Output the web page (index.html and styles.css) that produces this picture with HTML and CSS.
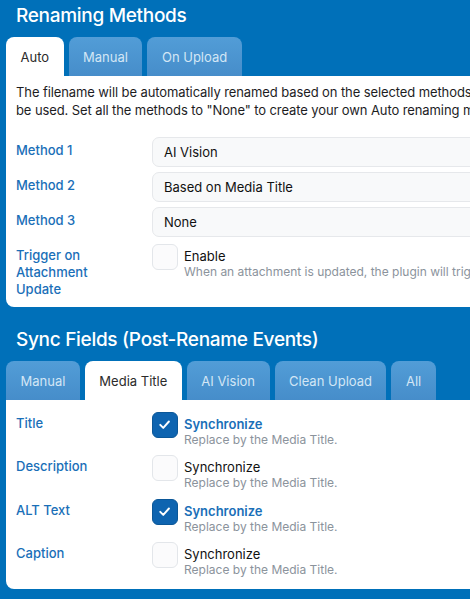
FILE: index.html
```html
<!DOCTYPE html>
<html>
<head>
<meta charset="utf-8">
<link rel="stylesheet" href="styles.css">
</head>
<body>
<div class="page">
  <section class="section">
    <h2 class="title">Renaming Methods</h2>
    <div class="tabs">
      <div class="tab active">Auto</div>
      <div class="tab">Manual</div>
      <div class="tab">On Upload</div>
    </div>
    <div class="card card-first">
      <p class="desc">The filename will be automatically renamed based on the selected methods, in order. The first one that works will<br>be used. Set all the methods to "None" to create your own Auto renaming method.</p>
      <div class="row row-method">
        <div class="label">Method 1</div>
        <div class="select">AI Vision</div>
      </div>
      <div class="row row-method">
        <div class="label">Method 2</div>
        <div class="select">Based on Media Title</div>
      </div>
      <div class="row row-method">
        <div class="label">Method 3</div>
        <div class="select">None</div>
      </div>
      <div class="row row-check">
        <div class="label">Trigger on Attachment Update</div>
        <div class="box"></div>
        <div class="check-text">
          <div class="check-title">Enable</div>
          <div class="check-sub">When an attachment is updated, the plugin will trigger the renaming process automatically.</div>
        </div>
      </div>
    </div>
  </section>

  <section class="section">
    <h2 class="title">Sync Fields (Post-Rename Events)</h2>
    <div class="tabs">
      <div class="tab">Manual</div>
      <div class="tab active">Media Title</div>
      <div class="tab">AI Vision</div>
      <div class="tab">Clean Upload</div>
      <div class="tab">All</div>
    </div>
    <div class="card card-second">
      <div class="row row-check">
        <div class="label">Title</div>
        <div class="box checked"><svg viewBox="0 0 26 26" class="tick"><path d="M8.2 13.4 L11.6 16.8 L18 9.6" /></svg></div>
        <div class="check-text">
          <div class="check-title on">Synchronize</div>
          <div class="check-sub">Replace by the Media Title.</div>
        </div>
      </div>
      <div class="row row-check">
        <div class="label">Description</div>
        <div class="box"></div>
        <div class="check-text">
          <div class="check-title">Synchronize</div>
          <div class="check-sub">Replace by the Media Title.</div>
        </div>
      </div>
      <div class="row row-check">
        <div class="label">ALT Text</div>
        <div class="box checked"><svg viewBox="0 0 26 26" class="tick"><path d="M8.2 13.4 L11.6 16.8 L18 9.6" /></svg></div>
        <div class="check-text">
          <div class="check-title on">Synchronize</div>
          <div class="check-sub">Replace by the Media Title.</div>
        </div>
      </div>
      <div class="row row-check">
        <div class="label">Caption</div>
        <div class="box"></div>
        <div class="check-text">
          <div class="check-title">Synchronize</div>
          <div class="check-sub">Replace by the Media Title.</div>
        </div>
      </div>
    </div>
  </section>
</div>
</body>
</html>
```

FILE: styles.css
```css
html, body {
  margin: 0;
  padding: 0;
  overflow: hidden;
  background: #0070b9;
}
body {
  font-family: Inter, "Liberation Sans", sans-serif;
  font-size: 13px;
  color: #1d1d1f;
  width: 470px;
  height: 599px;
}
.page {
  width: 760px;
  padding: 3.5px 0 0 6px;
}
.section + .section {
  margin-top: 20.5px;
}
.title {
  margin: 0 0 9.5px 10px;
  font-size: 19px;
  line-height: 24px;
  font-weight: 500;
  color: #ffffff;
  letter-spacing: -0.3px;
}
.tabs {
  display: flex;
  gap: 5px;
  height: 39px;
}
.tab {
  height: 39px;
  padding: 0 14.5px;
  display: flex;
  align-items: center;
  border-radius: 8px 8px 0 0;
  background: linear-gradient(#529dd7, #468dca);
  color: #d3e6f5;
  font-size: 13px;
}
.tab.active {
  background: #ffffff;
  color: #2b2b2b;
}
.card {
  background: #ffffff;
  border-radius: 0 8px 8px 8px;
  padding: 7px 10px 9px 10px;
}
.card-second {
  padding: 11.5px 10px 11px 10px;
}
.desc {
  margin: 0 0 18px 0;
  line-height: 18px;
  white-space: nowrap;
  letter-spacing: -0.1px;
}
.row {
  display: flex;
  align-items: flex-start;
}
.row-method + .row-method {
  margin-top: 5px;
}
.row-method + .row-check {
  margin-top: 7px;
}
.row-check + .row-check {
  margin-top: 7.5px;
}
.label {
  width: 136px;
  flex: none;
  box-sizing: border-box;
  padding-right: 16px;
  color: #1a6fb8;
  font-weight: 500;
  line-height: 17px;
}
.row-method .label {
  padding-top: 4.5px;
}
.row-check .label {
  padding-top: 3px;
}
.select {
  width: 540px;
  height: 30px;
  box-sizing: border-box;
  border: 1px solid #e6e8eb;
  border-radius: 7px;
  background: #f8f9fa;
  padding: 0 11px;
  display: flex;
  align-items: center;
  color: #111111;
}
.box {
  width: 26px;
  height: 26px;
  flex: none;
  box-sizing: border-box;
  border: 1.5px solid #e3e6ea;
  border-radius: 6px;
  background: #fbfbfc;
}
.box.checked {
  background: #0e64b0;
  border-color: #0b5798;
}
.tick {
  display: block;
  width: 23px;
  height: 23px;
  fill: none;
  stroke: #ffffff;
  stroke-width: 2.2;
  stroke-linecap: round;
  stroke-linejoin: round;
}
.check-text {
  margin-left: 6px;
  padding-top: 4px;
}
.check-title {
  line-height: 16px;
  color: #111111;
}
.check-title.on {
  color: #1a6fb8;
  font-weight: 600;
}
.check-sub {
  font-size: 12px;
  line-height: 16px;
  color: #8b939c;
  white-space: nowrap;
}
```
